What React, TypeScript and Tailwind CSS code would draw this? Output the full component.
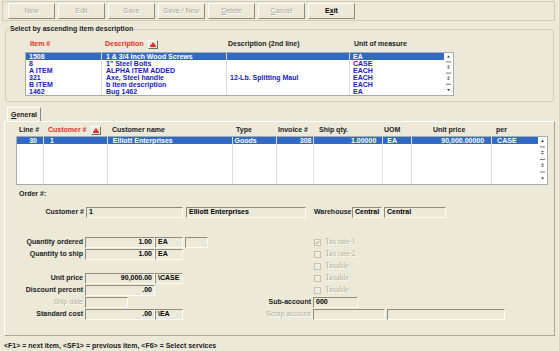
import React from "react";

const items = [
  ["1508", "1 & 3/4 Inch Wood Screws", "", "EA"],
  ["8", "1\" Steel Bolts", "", "CASE"],
  ["A ITEM", "ALPHA ITEM ADDED", "", "EACH"],
  ["321", "Axe, Steel handle", "12-Lb. Splitting Maul", "EACH"],
  ["B ITEM", "b item description", "", "EACH"],
  ["1462", "Bug 1462", "", "EA"],
];

const lineCols = [
  { w: "w-[27px]", head: "Line #", hp: "pl-[3px]", val: "30", vc: "justify-end pr-[6px]" },
  { w: "w-[64px]", head: "Customer #", hp: "pl-[5px]", val: "1", vc: "pl-[6px]", red: true, sort: true },
  { w: "w-[125px]", head: "Customer name", hp: "pl-[5px]", val: "Elliott Enterprises", vc: "pl-[5px]" },
  { w: "w-[44px]", head: "Type", hp: "pl-[4px]", val: "Goods", vc: "pl-[2px]" },
  { w: "w-[38px]", head: "Invoice #", hp: "pl-[2px]", val: "308", vc: "justify-end pr-[2px]" },
  { w: "w-[69px]", head: "Ship qty.", hp: "pl-[5px]", val: "1.00000", vc: "justify-end pr-[6px]" },
  { w: "w-[29px]", head: "UOM", hp: "pl-[1px]", val: "EA", vc: "pl-[4px]" },
  { w: "w-[80px]", head: "Unit price", hp: "pl-[21px]", val: "90,000.00000", vc: "justify-end pr-[7px]" },
  { w: "w-[46px]", head: "per", hp: "pl-[4px]", val: "CASE", vc: "pl-[5px]" },
];

function SortIcon() {
  return (
    <span className="inline-flex w-[10px] h-[9px] ml-[4px] items-center justify-center border border-t-white border-l-white border-r-[#716f64] border-b-[#716f64] bg-[#ece9d8]">
      <svg width="6" height="5" viewBox="0 0 6 5">
        <path d="M3 0 L6 4 L0 4 Z" fill="#e0302a" />
        <rect x="0" y="4" width="6" height="1" fill="#e0302a" />
      </svg>
    </span>
  );
}

function ScrollStrip({ h }: { h: number }) {
  const s = h / 6;
  return (
    <svg width="9" height={h} viewBox={`0 0 9 ${h}`} className="shrink-0">
      <rect x="0" y="0" width="9" height={h} fill="#ffffff" />
      <path d={`M4.5 ${s * 0.5 - 1} L6 ${s * 0.5 + 1} L3 ${s * 0.5 + 1} Z`} fill="#333" />
      <rect x="2" y={s * 1.2} width="5" height="1" fill="#777" />
      <rect x="3.5" y={s * 2 - 1.5} width="2" height="1" fill="#333" />
      <rect x="3.5" y={s * 2 + 0.5} width="2" height="1" fill="#333" />
      <rect x="2" y={s * 2.8} width="5" height="1" fill="#777" />
      <rect x="3.5" y={s * 3.6 - 1.5} width="2" height="1" fill="#333" />
      <rect x="3.5" y={s * 3.6 + 0.5} width="2" height="1" fill="#333" />
      <rect x="2" y={s * 4.4} width="5" height="1" fill="#777" />
      <path d={`M3 ${s * 5.3 - 1} L6 ${s * 5.3 - 1} L4.5 ${s * 5.3 + 1} Z`} fill="#333" />
    </svg>
  );
}

function ToolBtn({ label, on = false }: { label: React.ReactNode; on?: boolean }) {
  return (
    <div
      className={
        "w-[47px] h-[16px] flex items-center justify-center border border-t-white border-l-white border-r-[#8c8a7c] border-b-[#8c8a7c] text-[7px] " +
        (on ? "font-bold text-black" : "font-normal text-[#aca899] [text-shadow:1px_1px_0_#fff]")
      }
    >
      {label}
    </div>
  );
}

function Field({ w, children, right = false }: { w: string; children?: React.ReactNode; right?: boolean }) {
  return (
    <div
      className={
        w +
        " h-[11px] shrink-0 border border-t-[#8f8c7d] border-l-[#8f8c7d] border-r-[#fbfaf6] border-b-[#fbfaf6] bg-[#ece9d8] flex items-center px-[2px] font-bold text-black " +
        (right ? "justify-end" : "")
      }
    >
      {children}
    </div>
  );
}

function Check({ label, checked = false }: { label: string; checked?: boolean }) {
  return (
    <div className="flex items-center gap-[4px] pl-[1px]">
      <span className="w-[7px] h-[7px] border border-[#c4c1b0] bg-[#f1efe4] flex items-center justify-center">
        {checked && (
          <svg width="5" height="5" viewBox="0 0 5 5">
            <path d="M0.5 2.5 L2 4 L4.5 0.8" stroke="#a8a596" strokeWidth="1" fill="none" />
          </svg>
        )}
      </span>
      <span className="font-['Liberation_Serif',serif] font-normal text-[7.5px] text-[#b3b0a0] [text-shadow:1px_1px_0_#fff]">{label}</span>
    </div>
  );
}

function Label({ children, dim = false, w }: { children?: React.ReactNode; dim?: boolean; w: string }) {
  return (
    <div className={w + " shrink-0 text-right pr-[2px] whitespace-nowrap " + (dim ? "font-normal text-[#b3b0a0] [text-shadow:1px_1px_0_#fff]" : "font-bold text-[#222]")}>
      {children}
    </div>
  );
}

function FormRow({ left, rlabel, rdim = false, right }: { left?: React.ReactNode; rlabel?: string; rdim?: boolean; right?: React.ReactNode }) {
  return (
    <div className="h-[12px] flex items-center">
      <div className="w-[225px] shrink-0 flex items-center">{left}</div>
      <Label w="w-[82px]" dim={rdim}>{rlabel}</Label>
      <div className="flex items-center gap-[2px]">{right}</div>
    </div>
  );
}

export default function App() {
  return (
    <div className="w-[559px] h-[351px] bg-[#ece9d8] overflow-hidden flex flex-col font-['Liberation_Sans',Arial,sans-serif] text-[7px] leading-[8px] text-black">
      {/* toolbar */}
      <div className="h-[22px] pt-[1px] pl-[2px] pr-[4px]">
        <div className="h-[20px] border border-[#cfccbc] flex items-center pl-[5px] gap-[3px]">
          <ToolBtn label="New" />
          <ToolBtn label="Edit" />
          <ToolBtn label="Save" />
          <ToolBtn label="Save / New" />
          <ToolBtn label={<><u>D</u>elete</>} />
          <ToolBtn label={<><u>C</u>ancel</>} />
          <ToolBtn label={<>E<u>x</u>it</>} on />
        </div>
      </div>

      {/* item selection group */}
      <fieldset className="mt-[3px] mx-[5px] border border-[#d0cdbd] rounded-[3px] pb-[5px]">
        <legend className="ml-[3px] px-[1px] font-bold text-[#222] leading-[8px]">Select by ascending item description</legend>
        <div className="pl-[19px]">
          <div className="mt-[7px] h-[8px] flex items-center font-bold">
            <div className="w-[76px] pl-[5px] text-[#e0302a]">Item #</div>
            <div className="w-[125px] pl-[4px] text-[#e0302a] flex items-center">Description<SortIcon /></div>
            <div className="w-[123px] pl-[2px] text-[#222]">Description (2nd line)</div>
            <div className="w-[94px] pl-[5px] text-[#222]">Unit of measure</div>
          </div>
          <div className="mt-[4px] w-[429px] flex border border-[#a5acb5] bg-white">
            <div className="w-[418px]">
              {items.map((r, i) => (
                <div key={i} className={"h-[7px] flex items-center font-bold leading-[7px] " + (i === 0 ? "bg-[#316ac5] text-white" : "text-[#1b1bb5]")}>
                  <div className="w-[76px] pl-[3px] h-full flex items-center border-r border-[#dcdcdc]">{r[0]}</div>
                  <div className="w-[125px] pl-[4px] h-full flex items-center border-r border-[#dcdcdc]">{r[1]}</div>
                  <div className="w-[123px] pl-[3px] h-full flex items-center border-r border-[#dcdcdc]">{r[2]}</div>
                  <div className="w-[94px] pl-[3px] h-full flex items-center">{r[3]}</div>
                </div>
              ))}
            </div>
            <ScrollStrip h={42} />
          </div>
        </div>
      </fieldset>

      {/* tab */}
      <div className="mt-[5px] ml-[7px] flex">
        <div className="h-[14px] w-[34px] flex items-center justify-center border border-b-0 border-t-white border-l-white border-r-[#8c8a7c] font-bold text-[#222]">
          <span><u>G</u>eneral</span>
        </div>
      </div>
      <div className="mx-[4px] h-[215px] border border-t-white border-l-white border-r-[#aca899] border-b-[#aca899] pl-[1px] flex flex-col">
        {/* lines table */}
        <div className="mt-[4px] ml-[10px] h-[8px] flex items-center font-bold">
          {lineCols.map((c, i) => (
            <div key={i} className={c.w + " " + c.hp + " flex items-center whitespace-nowrap " + (c.red ? "text-[#e0302a]" : "text-[#222]")}>
              {c.head}
              {c.sort && <SortIcon />}
            </div>
          ))}
        </div>
        <div className="mt-[2px] ml-[10px] w-[532px] h-[49px] flex border border-[#a5acb5] bg-white">
          <div className="w-[521px] flex">
            {lineCols.map((c, i) => (
              <div key={i} className={c.w + " h-full " + (i < lineCols.length - 1 ? "border-r border-[#dcdcdc]" : "")}>
                <div className={"h-[7px] bg-[#316ac5] text-white font-bold flex items-center leading-[7px] whitespace-nowrap " + c.vc}>{c.val}</div>
              </div>
            ))}
          </div>
          <ScrollStrip h={47} />
        </div>

        <div className="mt-[5px] ml-[13px] h-[8px] font-bold text-[#222]">Order #:</div>

        <div className="mt-[8px] h-[12px] flex items-center">
          <Label w="w-[80px]">Customer #</Label>
          <Field w="w-[97px]">1</Field>
          <div className="w-[3px]" />
          <Field w="w-[120px]">Elliott Enterprises</Field>
          <div className="w-[8px]" />
          <div className="w-[38px] font-bold text-[#222]">Warehouse</div>
          <Field w="w-[30px]">Central</Field>
          <div className="w-[2px]" />
          <Field w="w-[62px]">Central</Field>
        </div>

        <div className="mt-[18px] flex flex-col">
          <FormRow
            left={<><Label w="w-[79px]">Quantity ordered</Label><Field w="w-[70px]" right>1.00</Field><Field w="w-[28px]">EA</Field><div className="w-[2px]" /><Field w="w-[23px]" /></>}
            right={<Check label="Tax rate-1" checked />}
          />
          <FormRow
            left={<><Label w="w-[79px]">Quantity to ship</Label><Field w="w-[70px]" right>1.00</Field><Field w="w-[28px]">EA</Field></>}
            right={<Check label="Tax rate-2" />}
          />
          <FormRow right={<Check label="Taxable" />} />
          <FormRow
            left={<><Label w="w-[79px]">Unit price</Label><Field w="w-[70px]" right>90,000.00</Field><Field w="w-[28px]">\CASE</Field></>}
            right={<Check label="Taxable" />}
          />
          <FormRow
            left={<><Label w="w-[79px]">Discount percent</Label><Field w="w-[70px]" right>.00</Field></>}
            right={<Check label="Taxable" />}
          />
          <FormRow
            left={<><Label w="w-[79px]" dim>Ship date</Label><Field w="w-[43px]" /></>}
            rlabel="Sub-account"
            right={<Field w="w-[45px]">000</Field>}
          />
          <FormRow
            left={<><Label w="w-[79px]">Standard cost</Label><Field w="w-[70px]" right>.00</Field><Field w="w-[28px]">\EA</Field></>}
            rlabel="Scrap account"
            rdim
            right={<><Field w="w-[72px]" /><Field w="w-[118px]" /></>}
          />
        </div>
      </div>

      <div className="mt-[6px] pl-[4px] h-[8px] font-bold text-[#222] whitespace-nowrap">
        &lt;F1&gt; = next item, &lt;SF1&gt; = previous item, &lt;F6&gt; = Select services
      </div>
    </div>
  );
}
